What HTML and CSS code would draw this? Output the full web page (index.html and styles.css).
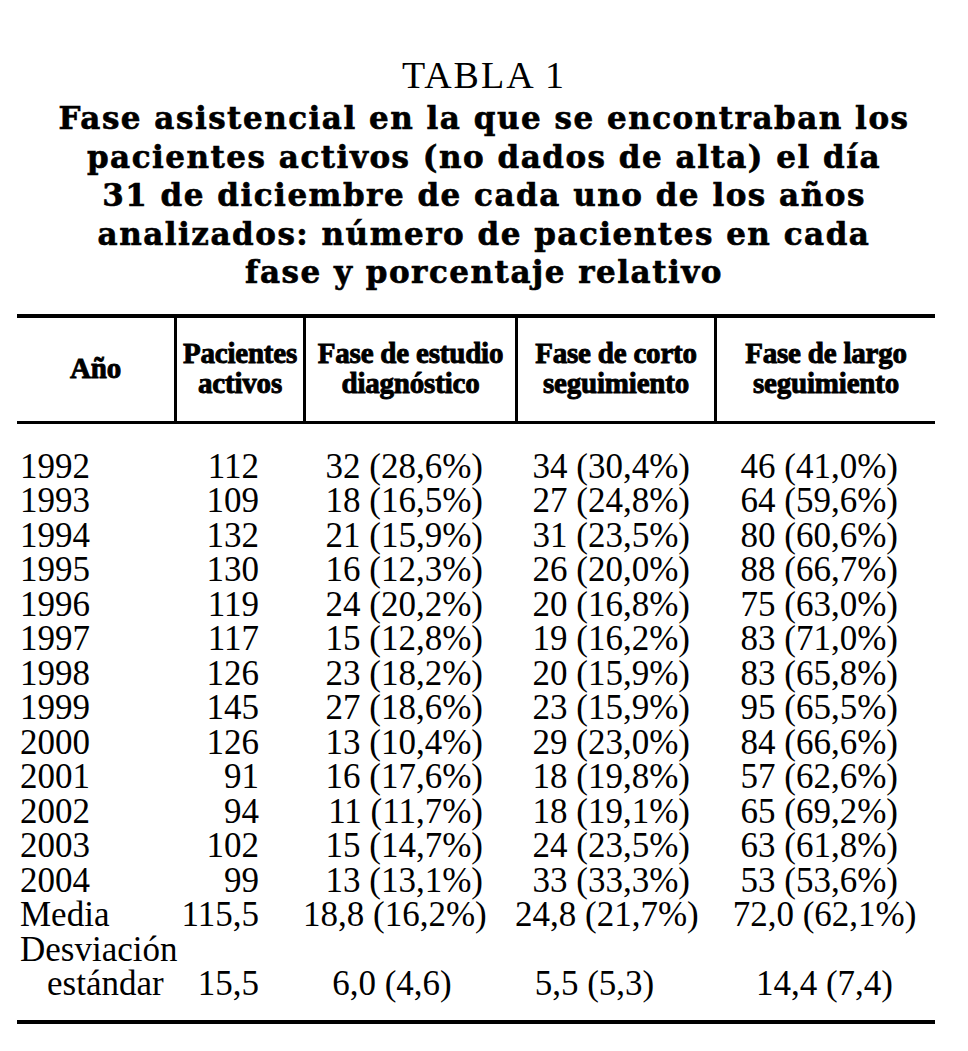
FILE: index.html
```html
<!DOCTYPE html>
<html lang="es">
<head>
<meta charset="utf-8">
<title>Tabla 1</title>
<link rel="stylesheet" href="styles.css">
</head>
<body>
<div class="page">
  <div class="label">TABLA 1</div>
  <h1 class="title">Fase asistencial en la que se encontraban los<br>pacientes activos (no dados de alta) el día<br>31 de diciembre de cada uno de los años<br>analizados: número de pacientes en cada<br>fase y porcentaje relativo</h1>

  <div class="table">
    <div class="head">
      <div class="hc">Año</div>
      <div class="hc sep">Pacientes<br>activos</div>
      <div class="hc sep">Fase de estudio<br>diagnóstico</div>
      <div class="hc sep">Fase de corto<br>seguimiento</div>
      <div class="hc sep">Fase de largo<br>seguimiento</div>
    </div>
    <div class="body">
      <div class="row"><span class="c1">1992</span><span class="c2">112</span><span class="c3">32 (28,6%)</span><span class="c4">34 (30,4%)</span><span class="c5">46 (41,0%)</span></div>
      <div class="row"><span class="c1">1993</span><span class="c2">109</span><span class="c3">18 (16,5%)</span><span class="c4">27 (24,8%)</span><span class="c5">64 (59,6%)</span></div>
      <div class="row"><span class="c1">1994</span><span class="c2">132</span><span class="c3">21 (15,9%)</span><span class="c4">31 (23,5%)</span><span class="c5">80 (60,6%)</span></div>
      <div class="row"><span class="c1">1995</span><span class="c2">130</span><span class="c3">16 (12,3%)</span><span class="c4">26 (20,0%)</span><span class="c5">88 (66,7%)</span></div>
      <div class="row"><span class="c1">1996</span><span class="c2">119</span><span class="c3">24 (20,2%)</span><span class="c4">20 (16,8%)</span><span class="c5">75 (63,0%)</span></div>
      <div class="row"><span class="c1">1997</span><span class="c2">117</span><span class="c3">15 (12,8%)</span><span class="c4">19 (16,2%)</span><span class="c5">83 (71,0%)</span></div>
      <div class="row"><span class="c1">1998</span><span class="c2">126</span><span class="c3">23 (18,2%)</span><span class="c4">20 (15,9%)</span><span class="c5">83 (65,8%)</span></div>
      <div class="row"><span class="c1">1999</span><span class="c2">145</span><span class="c3">27 (18,6%)</span><span class="c4">23 (15,9%)</span><span class="c5">95 (65,5%)</span></div>
      <div class="row"><span class="c1">2000</span><span class="c2">126</span><span class="c3">13 (10,4%)</span><span class="c4">29 (23,0%)</span><span class="c5">84 (66,6%)</span></div>
      <div class="row"><span class="c1">2001</span><span class="c2">91</span><span class="c3">16 (17,6%)</span><span class="c4">18 (19,8%)</span><span class="c5">57 (62,6%)</span></div>
      <div class="row"><span class="c1">2002</span><span class="c2">94</span><span class="c3">11 (11,7%)</span><span class="c4">18 (19,1%)</span><span class="c5">65 (69,2%)</span></div>
      <div class="row"><span class="c1">2003</span><span class="c2">102</span><span class="c3">15 (14,7%)</span><span class="c4">24 (23,5%)</span><span class="c5">63 (61,8%)</span></div>
      <div class="row"><span class="c1">2004</span><span class="c2">99</span><span class="c3">13 (13,1%)</span><span class="c4">33 (33,3%)</span><span class="c5">53 (53,6%)</span></div>
      <div class="row sum"><span class="c1">Media</span><span class="c2">115,5</span><span class="c3">18,8 (16,2%)</span><span class="c4">24,8 (21,7%)</span><span class="c5">72,0 (62,1%)</span></div>
      <div class="row sum"><span class="c1">Desviación</span></div>
      <div class="row sum"><span class="c1 indent">estándar</span><span class="c2">15,5</span><span class="c3">6,0 (4,6)</span><span class="c4">5,5 (5,3)</span><span class="c5">14,4 (7,4)</span></div>
    </div>
  </div>
</div>
</body>
</html>
```

FILE: styles.css
```css
html, body {
  margin: 0;
  padding: 0;
  background: #ffffff;
  color: #000000;
}

.page {
  width: 968px;
  padding-top: 53px;
  font-family: "Liberation Serif", "DejaVu Serif", serif;
}

.label {
  text-align: center;
  font-size: 38px;
  line-height: 44px;
  letter-spacing: 2px;
  font-weight: normal;
}

.title {
  margin: 2px 0 0 0;
  text-align: center;
  font-family: "DejaVu Serif", "Liberation Serif", serif;
  font-weight: bold;
  font-size: 31px;
  line-height: 38.5px;
  letter-spacing: 1.5px;
  -webkit-text-stroke: 0.6px #000;
}

.table {
  margin: 22px 0 0 17px;
  width: 918px;
  border-top: 4px solid #000;
  border-bottom: 4px solid #000;
}

.head {
  display: grid;
  grid-template-columns: 157px 129px 212px 199px 221px;
  border-bottom: 3px solid #000;
  height: 103px;
}

.hc {
  display: flex;
  align-items: center;
  justify-content: center;
  text-align: center;
  font-weight: bold;
  font-size: 29px;
  line-height: 30px;
  -webkit-text-stroke: 0.9px #000;
  letter-spacing: -0.2px;
  padding-bottom: 3px;
}

.sep {
  border-left: 3px solid #000;
}

.body {
  padding: 26px 0 18px 0;
  font-size: 35px;
  line-height: 34.5px;
}

.row {
  display: grid;
  grid-template-columns: 157px 129px 212px 199px 221px;
  height: 34.5px;
  white-space: nowrap;
}

.row span {
  display: block;
  text-align: right;
}

.row .c1 {
  text-align: left;
  padding-left: 3px;
}

.row .c2 { padding-right: 44px; }
.row .c3 { padding-right: 32px; }
.row .c4 { padding-right: 24px; }
.row .c5 { padding-right: 37px; }

.row.sum .c2 { padding-right: 44px; }
.row.sum .c3 { text-align: center; padding-right: 34px; }
.row.sum .c4 { text-align: center; padding-right: 40px; }
.row.sum .c5 { text-align: center; padding-right: 0; }

.row .indent {
  padding-left: 30px;
}
```
